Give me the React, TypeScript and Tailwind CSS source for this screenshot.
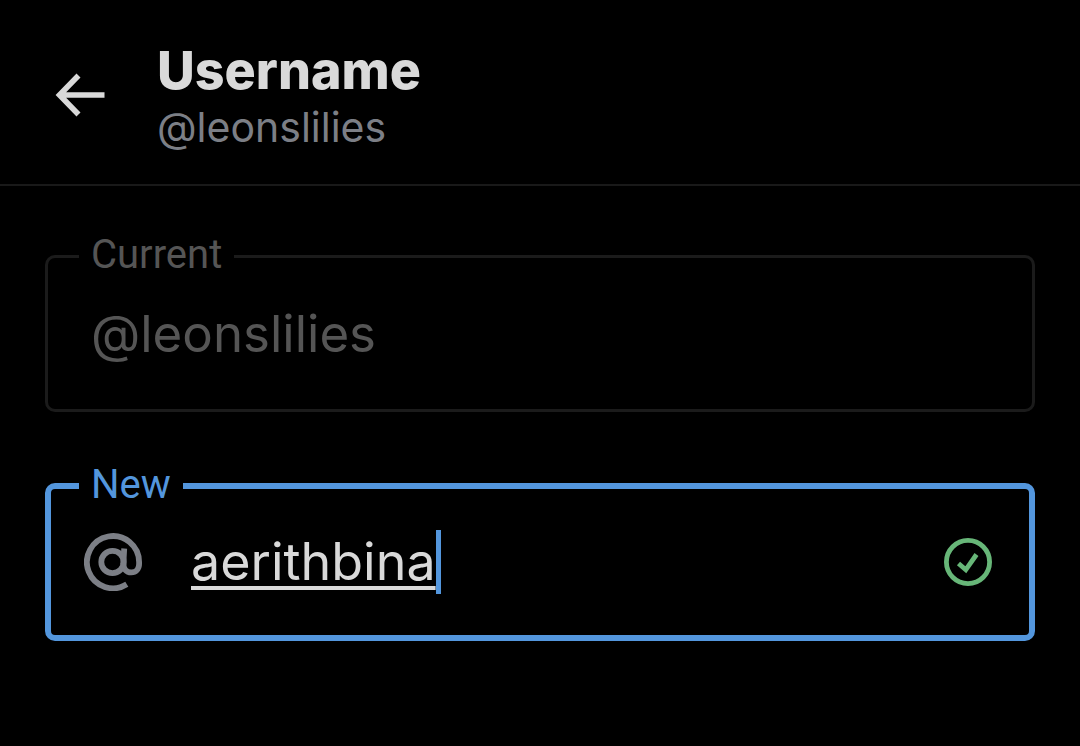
import { useState } from "react";

function BackArrow() {
  return (
    <svg width="50" height="44" viewBox="0 0 50 44" fill="none" aria-hidden="true">
      <path
        d="M23.500 2.500 4.500 22 23.500 41.500M5 22h44.500"
        stroke="#d9d9d9"
        strokeWidth="5.600"
      />
    </svg>
  );
}

function AtIcon() {
  return (
    <svg width="58" height="58" viewBox="0 0 58 58" fill="none" aria-hidden="true">
      <path
        d="M42.800 51.300A26.100 26.100 0 1 1 55.100 29v2c0 5-3.200 8.400-7.800 8.400-5.200 0-8.300-3.900-7.900-9.100L40.200 15.500"
        stroke="#7c7f86"
        strokeWidth="5.800"
      />
      <circle cx="28.500" cy="29" r="11.200" stroke="#7c7f86" strokeWidth="5.800" />
    </svg>
  );
}

function ValidIcon() {
  return (
    <svg width="48" height="48" viewBox="0 0 48 48" fill="none" role="img" aria-label="Available">
      <circle cx="24" cy="24" r="21.600" stroke="#67b678" strokeWidth="4.800" />
      <path d="m14.500 25.500 7.300 6.300 10.700-15.300" stroke="#67b678" strokeWidth="4.800" />
    </svg>
  );
}

export default function App() {
  const [username, setUsername] = useState("aerithbina");

  return (
    <div className="min-h-screen bg-black font-['Inter',sans-serif] text-[#d9d9d9]">
      <header className="flex items-center gap-13 border-b-2 border-[#191919] px-[55px] pt-[39px] pb-[33px]">
        <button type="button" aria-label="Back">
          <BackArrow />
        </button>
        <div>
          <h1 className="text-[52px] leading-[64px] font-extrabold">Username</h1>
          <p className="text-[41px] leading-[48px] text-[#7c7f86]">@leonslilies</p>
        </div>
      </header>

      <main className="px-[45px] pt-[46px]">
        <fieldset className="min-w-0 rounded-[10px] border-3 border-[#1b1b1b] px-[43px] pt-[22px] pb-[43px]">
          <legend className="-ml-3 px-3 pb-[2px] font-['Roboto',sans-serif] text-[40px] leading-[46px] text-[#555555]">
            <label htmlFor="current">Current</label>
          </legend>
          <input
            id="current"
            disabled
            value="@leonslilies"
            className="block h-16 w-full bg-transparent text-[51px] text-[#555555]"
          />
        </fieldset>

        <fieldset className="mt-[50px] min-w-0 rounded-[10px] border-6 border-[#5396dd] pt-5 pr-[37px] pb-[41px] pl-[33px]">
          <legend className="-ml-[5px] px-3 pb-[2px] font-['Roboto',sans-serif] text-[40px] leading-[46px] text-[#5396dd]">
            <label htmlFor="new">New</label>
          </legend>
          <div className="flex h-16 items-center">
            <AtIcon />
            <input
              id="new"
              value={username}
              onChange={(e) => setUsername(e.target.value)}
              className="ml-[49px] field-sizing-content h-16 bg-transparent text-[52px] underline decoration-4 underline-offset-[6px] caret-transparent outline-none"
            />
            <span className="h-16 w-[5px] bg-[#5396dd]" />
            <span className="ml-auto">
              <ValidIcon />
            </span>
          </div>
        </fieldset>
      </main>
    </div>
  );
}
